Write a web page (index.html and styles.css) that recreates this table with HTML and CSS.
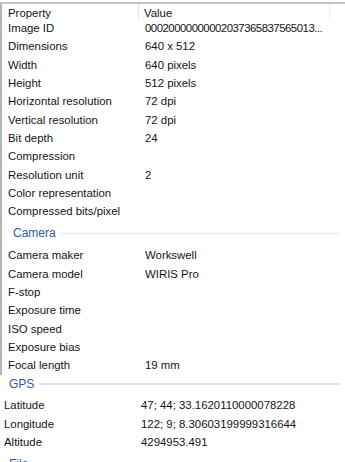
FILE: index.html
```html
<!DOCTYPE html>
<html lang="en">
  <head>
    <meta charset="UTF-8" />
    <meta name="viewport" content="width=device-width, initial-scale=1.0" />
    <title>Properties</title>
    <link rel="stylesheet" href="styles.css">
  </head>
  <body>
    <div class="panel">
      <div class="head">
        <span class="head-name">Property</span>
        <span class="head-value">Value</span>
      </div>
      <div class="row"><span class="name">Image ID</span><span class="value id">00020000000002037365837565013...</span></div>
      <div class="row"><span class="name">Dimensions</span><span class="value">640 x 512</span></div>
      <div class="row"><span class="name">Width</span><span class="value">640 pixels</span></div>
      <div class="row"><span class="name">Height</span><span class="value">512 pixels</span></div>
      <div class="row"><span class="name">Horizontal resolution</span><span class="value">72 dpi</span></div>
      <div class="row"><span class="name">Vertical resolution</span><span class="value">72 dpi</span></div>
      <div class="row"><span class="name">Bit depth</span><span class="value">24</span></div>
      <div class="row"><span class="name">Compression</span><span class="value"></span></div>
      <div class="row"><span class="name">Resolution unit</span><span class="value">2</span></div>
      <div class="row"><span class="name">Color representation</span><span class="value"></span></div>
      <div class="row"><span class="name">Compressed bits/pixel</span><span class="value"></span></div>

      <div class="group"><span>Camera</span><i class="rule"></i></div>
      <div class="row"><span class="name">Camera maker</span><span class="value">Workswell</span></div>
      <div class="row"><span class="name">Camera model</span><span class="value">WIRIS Pro</span></div>
      <div class="row"><span class="name">F-stop</span><span class="value"></span></div>
      <div class="row"><span class="name">Exposure time</span><span class="value"></span></div>
      <div class="row"><span class="name">ISO speed</span><span class="value"></span></div>
      <div class="row"><span class="name">Exposure bias</span><span class="value"></span></div>
      <div class="row"><span class="name">Focal length</span><span class="value">19 mm</span></div>
    </div>

    <div class="lower">
      <div class="group gps"><span>GPS</span><i class="rule"></i></div>
      <div class="row"><span class="name">Latitude</span><span class="value">47; 44; 33.1620110000078228</span></div>
      <div class="row"><span class="name">Longitude</span><span class="value">122; 9; 8.30603199999316644</span></div>
      <div class="row"><span class="name">Altitude</span><span class="value">4294953.491</span></div>
      <div class="group"><span>File</span><i class="rule"></i></div>
    </div>
  </body>
</html>
```

FILE: styles.css
```css
html,
body {
  margin: 0;
  height: 462px;
  overflow: hidden;
  background-color: #ffffff;
}
body {
  font-family: "Liberation Sans", Arial, sans-serif;
  font-size: 11.4px;
  color: #141414;
}
.panel {
  margin-top: 2px;
  border-top: 2px solid #c6c6c6;
  border-left: 2px solid #b4b4b4;
}
.head {
  display: flex;
  height: 15px;
  line-height: 18px;
}
.head-name {
  width: 130px;
  padding-left: 6px;
  border-right: 1px solid #e6e6e6;
}
.head-value {
  width: 185px;
  padding-left: 5px;
  border-right: 1px solid #ececec;
}
.row {
  display: flex;
  height: 18.33px;
  line-height: 18.33px;
  white-space: nowrap;
}
.name {
  width: 137px;
  padding-left: 6px;
}
.value {
  flex: 1;
  overflow: hidden;
}
.id {
  letter-spacing: -0.5px;
}
.group {
  display: flex;
  align-items: flex-start;
  height: 25.6px;
  padding: 3px 5px 0 11px;
  box-sizing: border-box;
  line-height: 18px;
  color: #2f55b4;
  font-size: 12px;
}
.rule {
  flex: 1;
  height: 1px;
  margin: 9px 0 0 5px;
  background-color: #e3e8f1;
}
.lower .row .name {
  padding-left: 4px;
  width: 137px;
}
.lower .row {
  height: 18.5px;
  line-height: 18.5px;
}
.lower .group {
  padding-left: 9px;
}
.gps {
  height: 21.7px;
  padding-top: 0;
}
.gps .rule {
  height: 2px;
  margin-top: 8px;
  background-color: #dde2ee;
}
```
